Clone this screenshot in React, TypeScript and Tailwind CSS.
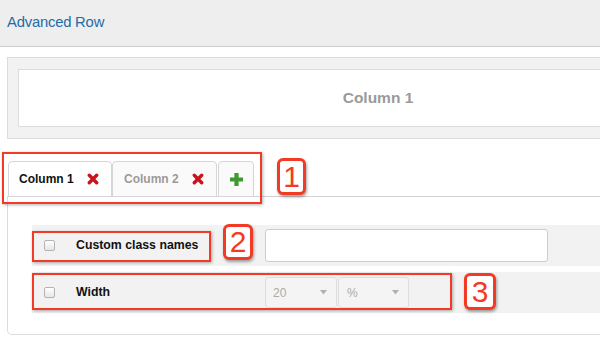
import React from "react";

const Cross = () => (
  <svg width="12" height="12" viewBox="0 0 12 12" className="shrink-0">
    <path d="M2.3 2.3 L9.7 9.7 M9.7 2.3 L2.3 9.7" stroke="#c8141e" strokeWidth="3.4" strokeLinecap="round" />
  </svg>
);

const Plus = () => (
  <svg width="15" height="15" viewBox="0 0 15 15">
    <path d="M7.5 1 V14 M1 7.5 H14" stroke="#3d9a2c" strokeWidth="4.2" strokeLinecap="butt" />
  </svg>
);

const Checkbox = () => (
  <div className="w-[11px] h-[11px] rounded-[2px] border border-[#b4b4b4] bg-gradient-to-b from-white to-[#e6e6e6] shrink-0" />
);

const Caret = () => (
  <svg width="7" height="5" viewBox="0 0 7 5">
    <path d="M0 0 H7 L3.5 4.5 Z" fill="#b0b0b0" />
  </svg>
);

const Badge = ({ n, cls }: { n: string; cls: string }) => (
  <div
    className={
      "absolute flex items-center justify-center bg-white border-[3px] border-[#f23a24] rounded-[6px] shadow-[1px_2px_3px_rgba(0,0,0,0.35)] text-[#f23a24] text-[30px] leading-none " +
      cls
    }
  >
    {n}
  </div>
);

export default function App() {
  return (
    <div
      className="relative w-[600px] h-[345px] overflow-hidden bg-white"
      style={{ fontFamily: '"Liberation Sans", Arial, sans-serif' }}
    >
      <div className="w-[760px]">
        <div className="h-[47px] bg-[#eeeeee] border-b border-[#cdcdcd] flex items-center px-[7px] pb-[1px]">
          <span className="text-[14.8px] text-[#1f6ca6] tracking-[-0.2px]">Advanced Row</span>
        </div>

        <div className="pl-[7px] pt-[10px] w-[749px]">
          <div className="bg-[#f2f2f2] border border-[#dcdcdc] pt-[11px] pb-[11px] px-[10px]">
            <div className="h-[58px] bg-white border border-[#dcdcdc] flex items-center justify-center">
              <span className="text-[15.5px] font-bold text-[#9a9a9a]">Column 1</span>
            </div>
          </div>

          <div className="mt-[22px] flex items-end pl-[1px] relative z-10">
            <div className="w-[104px] h-[36px] -mb-px bg-white border border-[#d6d6d6] rounded-t-[4px] flex items-center pl-[10px] gap-[13px]">
              <span className="text-[12px] font-bold text-[#111]">Column 1</span>
              <Cross />
            </div>
            <div className="w-[105px] h-[36px] -mb-px bg-[#fafafa] border border-[#d6d6d6] rounded-t-[4px] flex items-center pl-[11px] gap-[13px]">
              <span className="text-[12px] font-bold text-[#9a9a9a]">Column 2</span>
              <Cross />
            </div>
            <div className="ml-[1px] w-[36px] h-[36px] -mb-px bg-[#fafafa] border border-[#d6d6d6] rounded-t-[4px] flex items-center justify-center">
              <Plus />
            </div>
          </div>
          <div className="border border-[#dcdcdc] rounded-b-[5px] pt-[28px] pb-[21px] pl-[24px] border-t-[#d2d2d2]">
            <div className="h-[41px] bg-[#f2f2f2] flex items-center">
              <div className="w-[233px] flex items-center pl-[12px] gap-[21px]">
                <Checkbox />
                <span className="text-[12.3px] font-bold text-[#111]">Custom class names</span>
              </div>
              <div className="w-[283px] h-[33px] bg-white border border-[#cccccc] rounded-[3px]" />
            </div>
            <div className="mt-[6px] h-[41px] bg-[#f2f2f2] flex items-center">
              <div className="w-[233px] flex items-center pl-[12px] gap-[21px]">
                <Checkbox />
                <span className="text-[12.3px] font-bold text-[#111]">Width</span>
              </div>
              <div className="flex">
                <div className="w-[72px] h-[31px] bg-[#f4f4f4] border border-[#dedede] rounded-[3px] flex items-center justify-between pl-[7px] pr-[9px]">
                  <span className="text-[12px] text-[#ababab]">20</span>
                  <Caret />
                </div>
                <div className="ml-[1px] w-[71px] h-[31px] bg-[#f4f4f4] border border-[#dedede] rounded-[3px] flex items-center justify-between pl-[8px] pr-[9px]">
                  <span className="text-[12px] text-[#ababab]">%</span>
                  <Caret />
                </div>
              </div>
            </div>
          </div>
        </div>
      </div>

      <div className="absolute left-[2px] top-[152px] w-[260px] h-[52px] border-[2.5px] border-[#f23a24] shadow-[1px_1px_3px_rgba(0,0,0,0.3)] z-20" />
      <div className="absolute left-[32px] top-[231px] w-[179px] h-[31px] border-[2.5px] border-[#f23a24] shadow-[1px_1px_3px_rgba(0,0,0,0.3)] z-20" />
      <div className="absolute left-[32px] top-[273px] w-[420px] h-[37px] border-[2.5px] border-[#f23a24] shadow-[1px_1px_3px_rgba(0,0,0,0.3)] z-20" />

      <Badge n="1" cls="left-[277px] top-[158px] w-[29px] h-[37px] z-20" />
      <Badge n="2" cls="left-[223px] top-[224px] w-[30px] h-[36px] z-20" />
      <Badge n="3" cls="left-[464px] top-[273px] w-[32px] h-[37px] z-20" />
    </div>
  );
}
